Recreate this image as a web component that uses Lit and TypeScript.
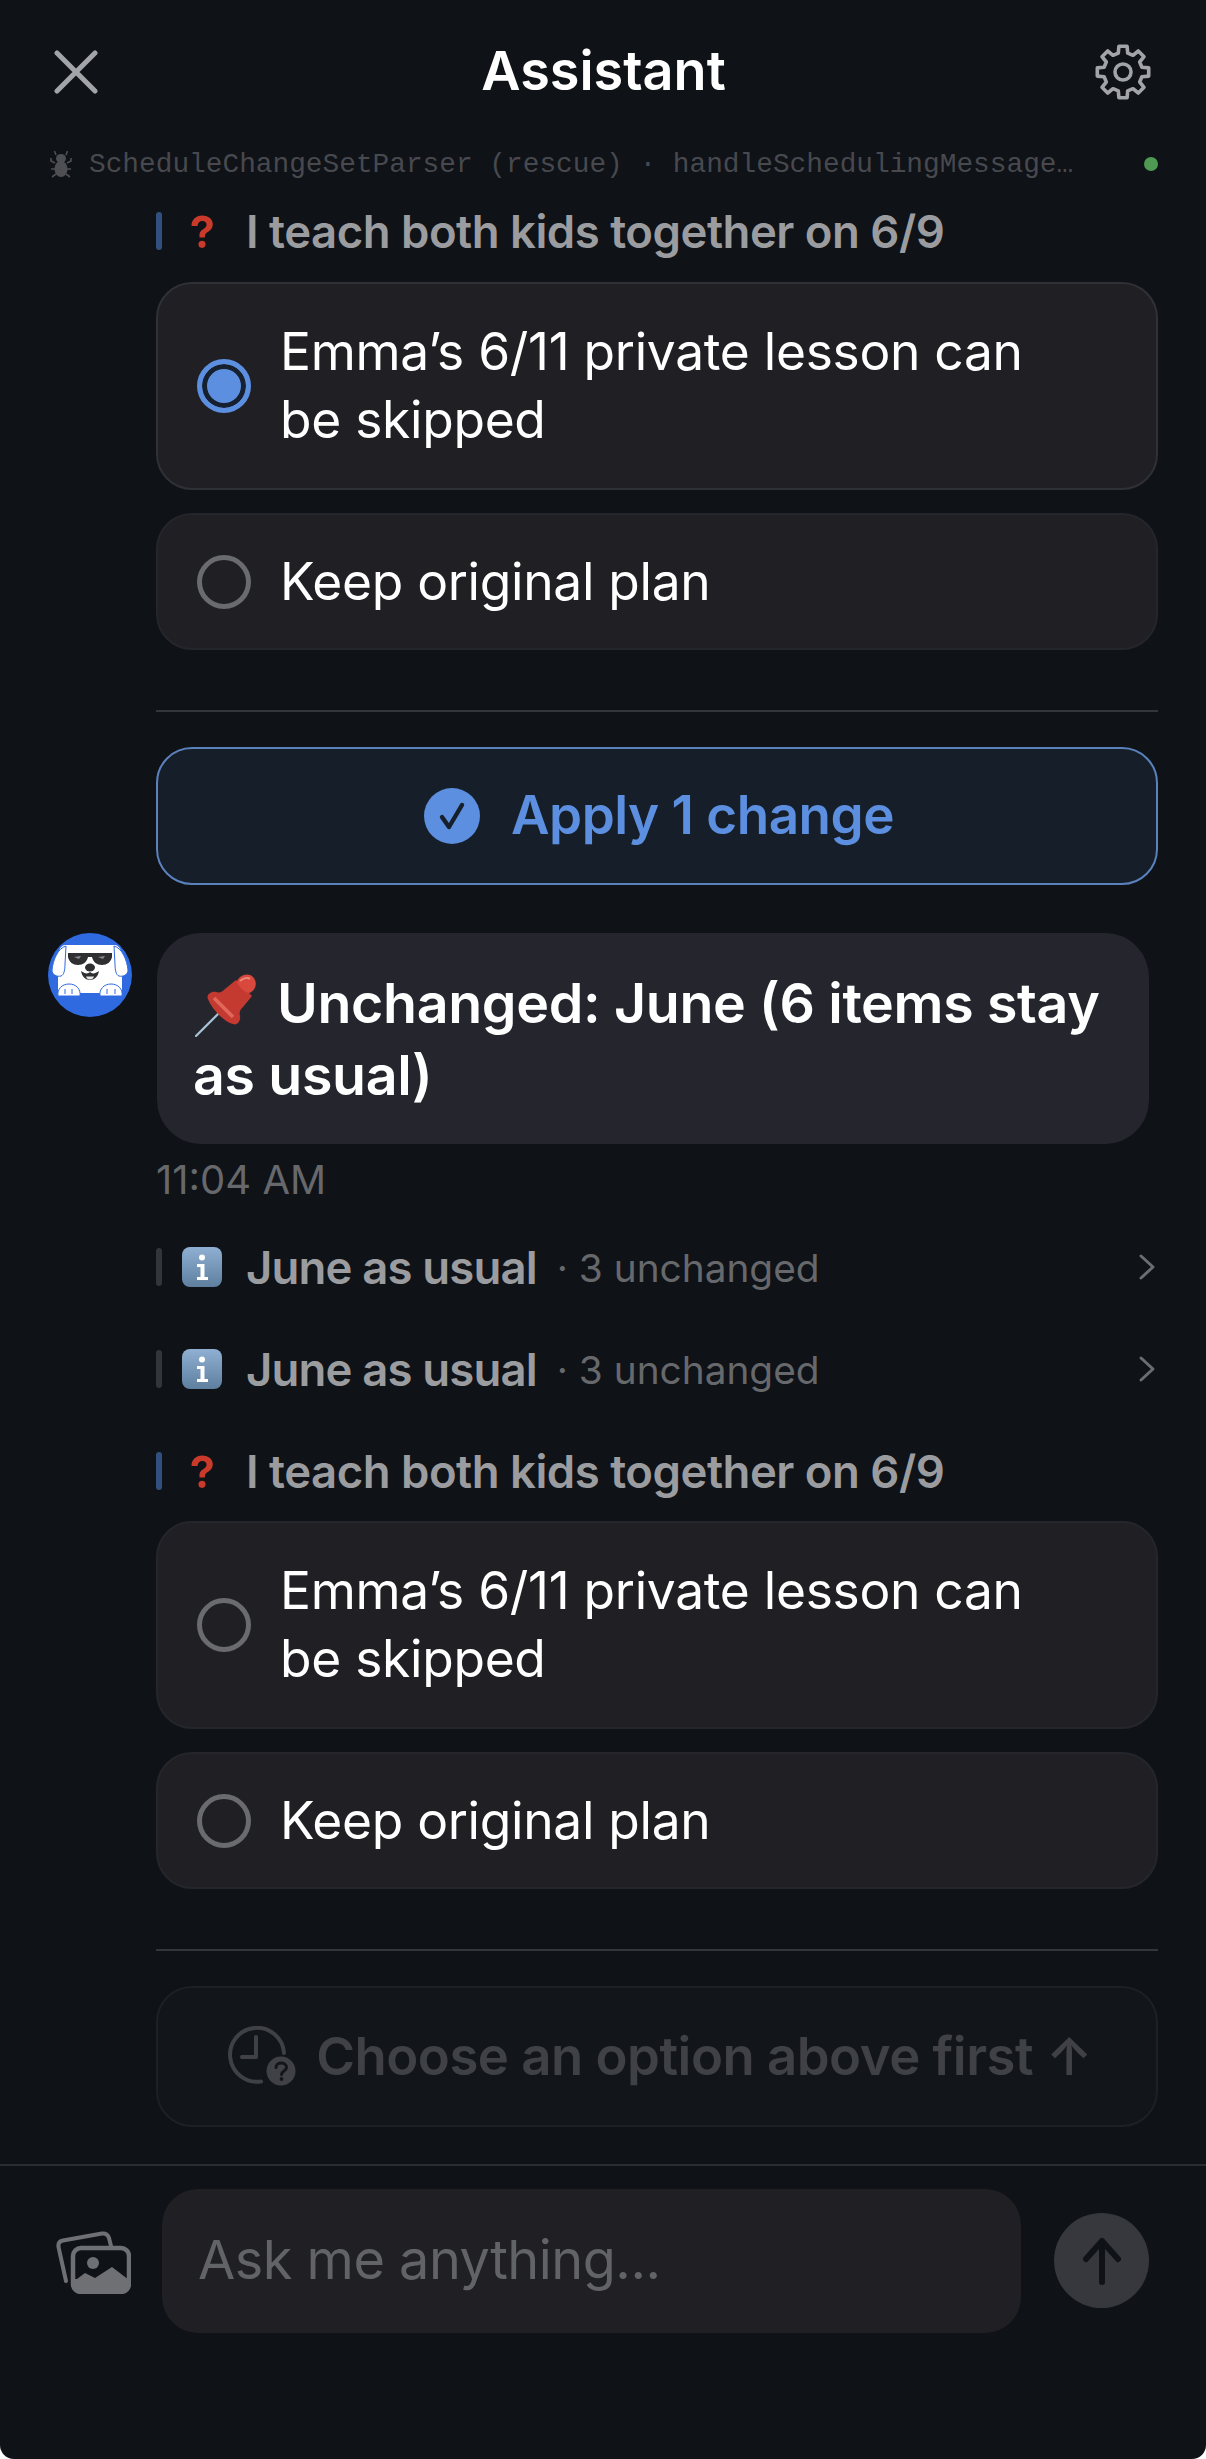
import { LitElement, html, css } from 'lit';
import { customElement } from 'lit/decorators.js';

// cog outline, 8 narrow teeth around a round hub
const gearPoints = Array.from({ length: 8 }, (_, i) => {
  const a = i * 45 - 90;
  return [
    [26, a - 9],
    [26, a + 9],
    [19.5, a + 14],
    [19.5, a + 31],
  ];
})
  .flat()
  .map(([r, deg]) => {
    const t = (deg * Math.PI) / 180;
    return `${(30 + r * Math.cos(t)).toFixed(1)},${(30 + r * Math.sin(t)).toFixed(1)}`;
  })
  .join(' ');

const closeIcon = html`<svg class="close" viewBox="0 0 44 44" fill="none" stroke="#a3a4a7" stroke-width="5" stroke-linecap="round">
  <path d="M3 3 41 41M41 3 3 41" />
</svg>`;

const gearIcon = html`<svg class="gear" viewBox="0 0 60 60" fill="none" stroke="#a3a4a7" stroke-width="3.600" stroke-linejoin="round">
  <polygon points=${gearPoints} />
  <circle cx="30" cy="30" r="8" />
</svg>`;

const bugIcon = html`<svg class="bug" viewBox="0 0 22 28" fill="#4e4f53">
  <ellipse cx="11" cy="19" rx="6.500" ry="8" />
  <ellipse cx="11" cy="8.500" rx="5" ry="4.500" />
  <path d="M6 5 4.500 1M16 5l1.500-4M5 13 1 11v-3M17 13l4-2v-3M5 19H1M17 19h4M6 24l-4 3M16 24l4 3" stroke="#4e4f53" stroke-width="1.600" fill="none" />
</svg>`;

const questionIcon = html`<svg class="emoji" viewBox="0 0 36 36" fill="#c93a2b">
  <path d="M13.400 13.400H8.600c-.2-5.400 3.800-9.400 9.600-9.400 5.700 0 9.500 3.300 9.500 7.900 0 3-1.400 5-4.100 6.700-2.300 1.400-3 2.400-3 4.300v1h-4.800l-.1-1.500c-.2-2.800.8-4.500 3.300-6 2.200-1.400 3.100-2.500 3.100-4.200 0-1.900-1.600-3.300-3.800-3.300-2.400 0-4 1.600-4.300 4.500z" />
  <circle cx="18" cy="30" r="3.200" />
</svg>`;

const infoIcon = html`<svg class="emoji" viewBox="0 0 40 40">
  <defs><linearGradient id="info" x1="0" y1="0" x2="0" y2="1"><stop offset="0" stop-color="#8fb0d2" /><stop offset="1" stop-color="#5f7f9f" /></linearGradient></defs>
  <rect width="40" height="40" rx="8" fill="url(#info)" />
  <circle cx="20" cy="10.500" r="3" fill="#fff" />
  <path d="M15 17h7.500v13H26v3H15v-3h3.500V20H15z" fill="#fff" />
</svg>`;

const pinIcon = html`<svg class="pin" viewBox="0 0 64 64">
  <path d="M1 63 27 37" stroke="#a9c3d8" stroke-width="2.200" stroke-linecap="round" />
  <path d="M13 26c-2-4 3-8 8-7 4 1 6 0 9-3l11-9 16 16-9 11c-3 3-4 5-3 9 1 5-3 10-7 8C29 49 17 36 13 26z" fill="#c43a30" />
  <path d="M42 9c2-7 11-10 16-5s3 14-4 16c-5-1-11-7-12-11z" fill="#d9483c" />
  <path d="M45 8c3-3 8-4 10-2" stroke="#ea8a7c" stroke-width="2" fill="none" />
  <path d="M19 25 38 44" stroke="#e2675b" stroke-width="3.500" />
</svg>`;

const dogAvatar = html`<svg class="avatar" viewBox="0 0 84 84">
  <circle cx="42" cy="42" r="42" fill="#2f6ae0" />
  <path d="M17 12H67C71 12 74 18 74 24V60H10V24C10 18 13 12 17 12z" fill="#fff" />
  <path d="M18 13C10 15 5 27 4 37 4 42 9 44 13 43 16 42 17 37 17 31z" fill="#fff" stroke="#2f6ae0" stroke-width="1" />
  <path d="M66 13C74 15 79 27 80 37 80 42 75 44 71 43 68 42 67 37 67 31z" fill="#fff" stroke="#2f6ae0" stroke-width="1" />
  <path d="M20 20H64V24C63 29 59 32 54 32 49 32 45 29 44 24H40C39 29 35 32 30 32 25 32 21 29 20 24z" fill="#2f2f31" />
  <path d="M26 24l7-1-2 3zM50 24l7-1-2 3z" fill="#8a8a8c" />
  <ellipse cx="42" cy="34.500" rx="5" ry="4" fill="#2f2f31" />
  <path d="M33 38C37 41 40 41 42 39 44 41 47 41 51 38 50 44 46 47 42 47 38 47 34 44 33 38z" fill="#2f2f31" />
  <path d="M38 43.500H46C45.500 45.500 44 46.500 42 46.500 40 46.500 38.500 45.500 38 43.500z" fill="#e6e6e6" />
  <path d="M10 63C9 56 14 51 21 51S33 56 32 63zM52 63C51 56 56 51 63 51S75 56 74 63z" fill="#fff" stroke="#2f6ae0" stroke-width="1" />
  <path d="M17 56v5M24 56v5M59 56v5M67 56v5" stroke="#2f6ae0" stroke-width="1" />
</svg>`;

const applyIcon = html`<svg class="apply-icon" viewBox="0 0 56 56">
  <circle cx="28" cy="28" r="28" fill="#5c8fdf" />
  <path d="M18 29 25 39 38 17" fill="none" stroke="#16202b" stroke-width="4.400" stroke-linecap="round" stroke-linejoin="round" />
</svg>`;

const clockIcon = html`<svg class="clock" viewBox="0 0 68 60" fill="none" stroke="#3f4146" stroke-width="4" stroke-linecap="round" stroke-linejoin="round">
  <path d="M56 27A27 27 0 1 0 33 55.500" />
  <path d="M28 11V31H14" />
  <circle cx="53" cy="45" r="14.500" fill="#3f4146" stroke="none" />
  <path d="M48 41.500c0-6 10.500-6 10.500 0 0 3.500-5 3.500-5 7" stroke="#121519" stroke-width="3" />
  <circle cx="53.500" cy="53" r="1.900" fill="#121519" stroke="none" />
</svg>`;

const photosIcon = html`<svg class="photos" viewBox="0 0 75 63" fill="none" stroke="#6e7074" stroke-linejoin="round">
  <path d="M10 50 2.500 16C2 12 4 10 7 9.500L46 2.500C50 2 52 4 53 7L55 15" stroke-width="4" stroke-linecap="round" />
  <rect x="17" y="17" width="56" height="44" rx="8" stroke-width="4.500" />
  <path d="M17 53V48H21L29 42 39 47 56 36 73 49V53C73 58 70 61 65 61H25C20 61 17 58 17 53z" fill="#6e7074" stroke="none" />
  <circle cx="37" cy="32" r="6" fill="#6e7074" stroke="none" />
</svg>`;

const sendIcon = html`<svg class="send-arrow" viewBox="0 0 44 50" fill="none" stroke="#0f1217" stroke-width="6" stroke-linecap="round" stroke-linejoin="round">
  <path d="M22 46V5M6 23 22 5l16 18" />
</svg>`;

const chevron = html`<svg class="chevron" viewBox="0 0 18 28" fill="none" stroke="#6b6d71" stroke-width="3" stroke-linecap="round" stroke-linejoin="round">
  <path d="M3 3 15 14 3 25" />
</svg>`;

@customElement('app-root')
export class AppRoot extends LitElement {
  static styles = css`
    :host {
      display: block;
      width: 1206px;
      height: 2459px;
      background: #fff;
      font-family: Inter, 'Liberation Sans', sans-serif;
    }
    .screen {
      height: 2459px;
      display: flex;
      flex-direction: column;
      overflow: hidden;
      background: #0f1217;
      color: #fff;
      border-radius: 0 0 14px 14px;
    }
    .header {
      height: 141px;
      flex: none;
      display: grid;
      grid-template-columns: 1fr auto 1fr;
      align-items: center;
      padding: 0 53px 0 54px;
      box-sizing: border-box;
    }
    .title {
      font-size: 54px;
      font-weight: 600;
    }
    .close {
      width: 44px;
      height: 44px;
      margin-top: 2px;
    }
    .gear {
      width: 60px;
      height: 60px;
      margin-top: 2px;
      justify-self: end;
    }
    .debug {
      height: 46px;
      flex: none;
      display: flex;
      align-items: center;
      padding: 0 48px 0 50px;
      gap: 17px;
      color: #48494e;
      font-family: 'Liberation Mono', monospace;
      font-size: 27.800px;
      white-space: nowrap;
    }
    .bug {
      width: 22px;
      height: 28px;
      flex: none;
    }
    .debug-text {
      flex: 1;
    }
    .dot {
      width: 14px;
      height: 14px;
      border-radius: 50%;
      background: #4f9a52;
    }
    .scroll {
      flex: 1;
      min-height: 0;
      overflow: hidden;
      padding: 23px 48px 0 48px;
    }
    .indented {
      margin-left: 108px;
    }
    .row {
      height: 42px;
      display: flex;
      align-items: center;
      color: #9b9c9f;
      font-size: 45.500px;
      font-weight: 600;
      letter-spacing: -0.500px;
      white-space: nowrap;
    }
    .bar {
      width: 6px;
      height: 38px;
      border-radius: 3px;
      background: #33353a;
      flex: none;
    }
    .bar.blue {
      background: #32507d;
    }
    .emoji {
      width: 40px;
      height: 40px;
      flex: none;
      margin: 0 24px 0 20px;
    }
    .row .meta {
      margin-left: 20px;
      color: #66686c;
      font-size: 38.800px;
      font-weight: 400;
      letter-spacing: 0;
    }
    .chevron {
      width: 18px;
      height: 28px;
      margin-left: auto;
      margin-right: 2px;
    }
    .options {
      display: flex;
      flex-direction: column;
      gap: 23px;
      margin-top: 30px;
    }
    .option {
      display: flex;
      align-items: center;
      gap: 29px;
      padding: 0 80px 2px 39px;
      min-height: 137px;
      box-sizing: border-box;
      background: #1f1f24;
      border: 2px solid #25262b;
      border-radius: 36px;
      font-size: 51.500px;
      line-height: 68px;
      letter-spacing: -0.300px;
    }
    .option.tall {
      padding-top: 33px;
      padding-bottom: 35px;
    }
    .option.selected {
      border-color: #303136;
    }
    .radio {
      width: 54px;
      height: 54px;
      margin-top: 2px;
      flex: none;
      box-sizing: border-box;
      border-radius: 50%;
      border: 5px solid #6a6b6f;
    }
    .radio.on {
      border-color: #5c8fdf;
      background: #5c8fdf;
      box-shadow: inset 0 0 0 5px #16202e;
    }
    .rule {
      height: 2px;
      margin-top: 60px;
      background: #34363b;
    }
    .apply {
      height: 138px;
      margin-top: 35px;
      padding: 0 0 2px 4px;
      box-sizing: border-box;
      display: flex;
      align-items: center;
      justify-content: center;
      gap: 31px;
      background: #161f29;
      border: 2px solid #5b82bd;
      border-radius: 36px;
      color: #5c8fdf;
      font-size: 53px;
      font-weight: 600;
      letter-spacing: -0.500px;
    }
    .apply-icon {
      width: 56px;
      height: 56px;
      margin-top: 2px;
    }
    .message {
      display: flex;
      gap: 25px;
      align-items: flex-start;
      margin-top: 48px;
    }
    .avatar {
      width: 84px;
      height: 84px;
      flex: none;
    }
    .bubble {
      flex: 1;
      box-sizing: border-box;
      height: 211px;
      padding: 34px 36px 0;
      margin-right: 9px;
      background: #25262d;
      border-radius: 44px;
      font-size: 55.500px;
      line-height: 72px;
      font-weight: 600;
      letter-spacing: -0.350px;
    }
    .pin {
      width: 64px;
      height: 64px;
      vertical-align: -14px;
      margin-left: 2px;
      margin-right: 18px;
    }
    .time {
      margin-top: 14px;
      color: #66686c;
      font-size: 40px;
      line-height: 44px;
    }
    .unchanged {
      margin-top: 44px;
      letter-spacing: -0.850px;
    }
    .unchanged + .unchanged {
      margin-top: 60px;
    }
    .section-gap {
      height: 60px;
    }
    .second {
      margin-top: -1px;
    }
    .disabled {
      height: 141px;
      margin-top: 35px;
      padding: 0 0 2px 6px;
      box-sizing: border-box;
      display: flex;
      align-items: center;
      justify-content: center;
      gap: 20px;
      background: #121519;
      border: 2px solid #1e2025;
      border-radius: 36px;
      color: #3f4146;
      font-size: 52.700px;
      font-weight: 600;
      letter-spacing: -0.500px;
    }
    .clock {
      width: 68px;
      height: 60px;
    }
    .footer {
      height: 295px;
      flex: none;
      box-sizing: border-box;
      border-top: 2px solid #2b2d32;
      display: flex;
      align-items: flex-start;
      padding: 23px 57px 0 56px;
    }
    .photos {
      width: 75px;
      height: 63px;
      margin: 42px 31px 0 0;
      flex: none;
    }
    .input {
      flex: 1;
      height: 144px;
      box-sizing: border-box;
      display: flex;
      align-items: center;
      padding: 0 36px 4px;
      background: #1f1f24;
      border-radius: 36px;
      color: #626367;
      font-size: 54px;
      letter-spacing: -0.500px;
    }
    .send {
      width: 95px;
      height: 95px;
      margin: 24px 0 0 33px;
      flex: none;
      display: flex;
      align-items: center;
      justify-content: center;
      border-radius: 50%;
      background: #36383d;
    }
    .send-arrow {
      width: 44px;
      height: 50px;
    }
  `;

  private question() {
    return html`<div class="row indented">
      <span class="bar blue"></span>${questionIcon}I teach both kids together on 6/9
    </div>`;
  }

  private options(selected: boolean) {
    return html`<div class="options indented">
      <div class="option tall ${selected ? 'selected' : ''}">
        <span class="radio ${selected ? 'on' : ''}"></span>
        <span>Emma’s 6/11 private lesson can be skipped</span>
      </div>
      <div class="option">
        <span class="radio"></span>
        <span>Keep original plan</span>
      </div>
    </div>`;
  }

  private unchanged() {
    return html`<div class="row indented unchanged">
      <span class="bar"></span>${infoIcon}June as usual
      <span class="meta">· 3 unchanged</span>${chevron}
    </div>`;
  }

  render() {
    return html`<div class="screen">
      <div class="header">
        ${closeIcon}
        <span class="title">Assistant</span>
        ${gearIcon}
      </div>
      <div class="debug">
        ${bugIcon}
        <span class="debug-text">ScheduleChangeSetParser (rescue) · handleSchedulingMessage…</span>
        <span class="dot"></span>
      </div>
      <div class="scroll">
        ${this.question()} ${this.options(true)}
        <div class="rule indented"></div>
        <div class="apply indented">${applyIcon}Apply 1 change</div>
        <div class="message">
          ${dogAvatar}
          <div class="bubble">${pinIcon}Unchanged: June (6 items stay as usual)</div>
        </div>
        <div class="time indented">11:04 AM</div>
        ${this.unchanged()} ${this.unchanged()}
        <div class="section-gap"></div>
        ${this.question()}
        <div class="second">${this.options(false)}</div>
        <div class="rule indented"></div>
        <div class="disabled indented">${clockIcon}Choose an option above first ↑</div>
      </div>
      <div class="footer">
        ${photosIcon}
        <div class="input">Ask me anything...</div>
        <div class="send">${sendIcon}</div>
      </div>
    </div>`;
  }
}
